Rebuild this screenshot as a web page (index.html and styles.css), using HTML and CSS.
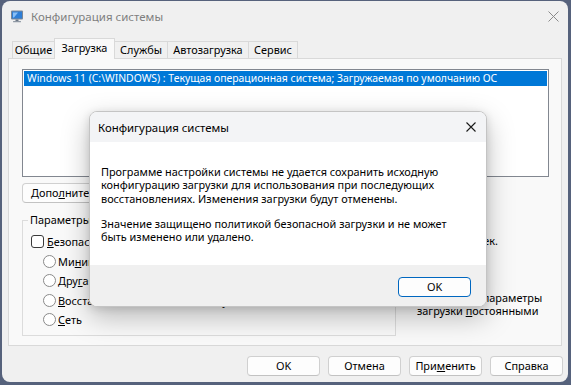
FILE: index.html
```html
<!DOCTYPE html>
<html lang="ru">
<head>
<meta charset="utf-8">
<title>Конфигурация системы</title>
<link rel="stylesheet" href="styles.css">
</head>
<body>
<div class="window">
  <div class="titlebar">
    <svg class="app-icon" width="14" height="14" viewBox="0 0 14 14">
      <rect x="1" y="1.5" width="12" height="9" rx="1" fill="#7b8796"/>
      <rect x="2" y="2.5" width="10" height="7" fill="#2f7fd6"/>
      <path d="M3 3.5 L8 3.5 L4 8.5 L3 8.5 Z" fill="#9fd0ff" opacity="0.8"/>
      <rect x="5.5" y="10.5" width="3" height="1.5" fill="#6b7684"/>
      <rect x="3" y="12" width="8" height="1.3" rx="0.5" fill="#8e98a4"/>
    </svg>
    <span class="title">Конфигурация системы</span>
    <svg class="win-close" width="11" height="11" viewBox="0 0 11 11">
      <path d="M0.5 0.5 L10.5 10.5 M10.5 0.5 L0.5 10.5" stroke="#8a8a8a" stroke-width="1" fill="none"/>
    </svg>
  </div>

  <div class="content">
    <div class="tabs">
      <div class="tab tab-general">Общие</div>
      <div class="tab tab-boot active">Загрузка</div>
      <div class="tab tab-services">Службы</div>
      <div class="tab tab-startup">Автозагрузка</div>
      <div class="tab tab-tools">Сервис</div>
    </div>

    <div class="panel">
      <div class="listbox">
        <div class="item selected">Windows 11 (C:\WINDOWS) : Текущая операционная система; Загружаемая по умолчанию ОС</div>
      </div>

      <div class="adv-row">
        <div class="btn adv">Допо<u>л</u>нительные параметры...</div>
      </div>

      <div class="options">
        <fieldset class="group">
          <legend>Параметры загрузки</legend>
          <div class="row"><span class="checkbox"></span><span><u>Б</u>езопасный режим</span></div>
          <div class="row sub"><span class="radio"></span><span>Ми<u>н</u>имальная</span></div>
          <div class="row sub"><span class="radio"></span><span>Дру<u>г</u>ая оболочка</span></div>
          <div class="row sub"><span class="radio"></span><span><u>В</u>осстановление Active Directory</span></div>
          <div class="row sub"><span class="radio"></span><span><u>С</u>еть</span></div>
        </fieldset>

        <div class="side">
          <div class="timeout-row"><span class="input"></span><span>сек.</span></div>
          <div class="persist">
            <span class="checkbox"></span>
            <span class="persist-label">Сделать эти параметры загрузки <u>п</u>остоянными</span>
          </div>
        </div>
      </div>
    </div>

    <div class="buttons">
      <div class="btn">OK</div>
      <div class="btn">Отмена</div>
      <div class="btn">При<u>м</u>енить</div>
      <div class="btn">Справка</div>
    </div>
  </div>

  <div class="modal">
    <div class="modal-title">
      <span>Конфигурация системы</span>
      <svg class="modal-close" width="10" height="10" viewBox="0 0 10 10">
        <path d="M0.5 0.5 L9.5 9.5 M9.5 0.5 L0.5 9.5" stroke="#1a1a1a" stroke-width="1.1" fill="none"/>
      </svg>
    </div>
    <div class="modal-body">
      <p>Программе настройки системы не удается сохранить исходную конфигурацию загрузки для использования при последующих восстановлениях. Изменения загрузки будут отменены.</p>
      <p>Значение защищено политикой безопасной загрузки и не может быть изменено или удалено.</p>
    </div>
    <div class="modal-footer">
      <div class="btn primary">OK</div>
    </div>
  </div>
</div>
</body>
</html>
```

FILE: styles.css
```css
* { box-sizing: border-box; }

html, body {
  margin: 0;
  padding: 0;
}

body {
  width: 571px;
  height: 385px;
  overflow: hidden;
  background: #56627c;
  font-family: "Noto Sans", "Open Sans", sans-serif;
  font-size: 10.9px;
  color: #000;
  padding: 1px 3px 0 2px;
}

.window {
  position: relative;
  width: 566px;
  height: 381px;
  background: #f0f0f0;
  border-radius: 8px;
  overflow: hidden;
}

u { text-decoration: underline; text-underline-offset: 1px; }

/* title bar */
.titlebar {
  height: 31px;
  display: flex;
  align-items: center;
  padding-left: 8px;
  padding-right: 8px;
}
.app-icon { flex: none; margin-top: -2px; }
.title {
  margin-left: 7px;
  font-size: 11.5px;
  color: #7f7f7f;
  flex: 1;
}
.win-close { flex: none; margin-right: 1px; }

/* content */
.content {
  padding: 0 6px;
}

.tabs {
  display: flex;
  height: 20px;
  margin-top: 6px;
  padding-left: 4px;
  align-items: flex-end;
  position: relative;
  z-index: 2;
}
.tab {
  height: 17px;
  border: 1px solid #d9d9d9;
  border-bottom: none;
  margin-left: -1px;
  display: flex;
  align-items: center;
  justify-content: center;
  background: #f0f0f0;
  line-height: 1;
  padding-top: 1px;
}
.tab-general { width: 43px; margin-left: 0; }
.tab-boot { width: 61px; }
.tab-services { width: 54px; }
.tab-startup { width: 82px; }
.tab-tools { width: 50px; }
.tab.active {
  height: 21px;
  margin-bottom: -1px;
  background: #f9f9f9;
  position: relative;
  z-index: 3;
  padding-bottom: 3px;
}

.panel {
  height: 288px;
  border: 1px solid #d9d9d9;
  background: #f9f9f9;
  padding: 10px 12px 0 13px;
  position: relative;
  z-index: 1;
}

.listbox {
  height: 108px;
  border: 1px solid #828790;
  background: #fff;
  padding: 1px;
}
.item {
  height: 15px;
  line-height: 14px;
  padding-left: 3px;
  white-space: nowrap;
  font-size: 10.4px;
}
.item.selected {
  background: #0078d7;
  color: #fff;
}

.adv-row {
  margin-top: 6px;
  display: flex;
}

.btn {
  height: 20px;
  width: 73px;
  border: 1px solid #d0d0d0;
  border-bottom-color: #c2c2c2;
  border-radius: 4px;
  background: #fdfdfd;
  display: flex;
  align-items: center;
  justify-content: center;
  line-height: 1;
  white-space: nowrap;
}
.btn.adv {
  width: 170px;
  justify-content: flex-start;
  padding-left: 8px;
}

.options {
  margin-top: 10px;
  display: flex;
  align-items: flex-start;
}

.group {
  margin: 0;
  width: 374px;
  height: 123px;
  border: 1px solid #dcdcdc;
  padding: 5px 8px 0 8px;
  min-inline-size: 0;
}
.group legend {
  padding: 0 2px;
  margin-left: -3px;
  line-height: 14px;
}

.row {
  height: 19.5px;
  display: flex;
  align-items: center;
  gap: 3px;
}
.row.sub {
  padding-left: 12px;
  gap: 2px;
}

.checkbox {
  flex: none;
  width: 13px;
  height: 13px;
  border: 1px solid #3a3a3a;
  border-radius: 3px;
  background: #fff;
}
.radio {
  flex: none;
  width: 13px;
  height: 13px;
  border: 1px solid #8a8a8a;
  border-radius: 50%;
  background: #fff;
}

.side {
  margin-left: 5px;
  padding-top: 17px;
  display: flex;
  flex-direction: column;
}
.timeout-row {
  height: 20px;
  display: flex;
  align-items: center;
  gap: 7px;
  padding-left: 4px;
}
.input {
  width: 66px;
  height: 20px;
  border: 1px solid #a0a0a0;
  background: #fff;
}
.persist {
  margin-top: 41px;
  display: flex;
  gap: 3px;
  align-items: flex-start;
}
.persist-label {
  width: 132px;
  line-height: 13px;
}

.buttons {
  margin-top: 10px;
  margin-right: -1px;
  display: flex;
  justify-content: flex-end;
  gap: 8px;
}

/* modal */
.modal {
  position: absolute;
  left: 87px;
  top: 110px;
  width: 398px;
  height: 196px;
  border: 1px solid #c4c4c4;
  border-radius: 8px;
  overflow: hidden;
  background: #fff;
  z-index: 10;
  box-shadow: 0 10px 28px rgba(0, 0, 0, 0.26), 0 2px 8px rgba(0, 0, 0, 0.12);
  display: flex;
  flex-direction: column;
}
.modal-title {
  height: 30px;
  flex: none;
  background: #f3f4f6;
  display: flex;
  align-items: center;
  justify-content: space-between;
  padding-left: 8px;
  padding-right: 10px;
  font-size: 11.4px;
}

.modal-body {
  height: 123px;
  flex: none;
  padding: 23px 11px 0 11px;
  line-height: 13.3px;
}
.modal-body p {
  margin: 0 0 12px 0;
}

.modal-footer {
  flex: 1;
  background: #f0f0f0;
  display: flex;
  justify-content: flex-end;
  padding: 12px 15px 0 0;
}
.btn.primary {
  border: 1.5px solid #0067c0;
  background: #fdfdfd;
}
```
